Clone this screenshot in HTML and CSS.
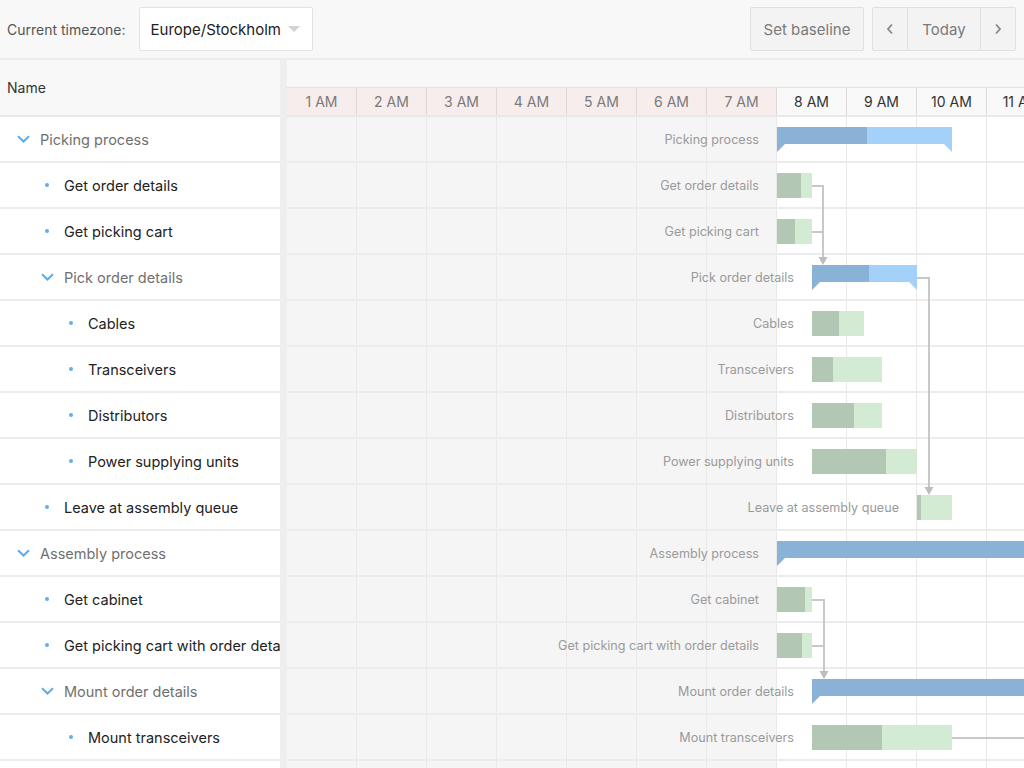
FILE: index.html
```html
<!DOCTYPE html>
<html>
<head>
<meta charset="utf-8">
<link rel="stylesheet" href="styles.css">
</head>
<body>
<div class="toolbar">
  <span class="tz-label">Current timezone:</span>
  <div class="select"><span>Europe/Stockholm</span><span class="caret"></span></div>
  <div class="spacer"></div>
  <button class="btn baseline">Set baseline</button>
  <div class="btn-group">
    <button class="btn nav prev"><svg width="8" height="12" viewBox="0 0 8 12"><path d="M6 1.5L2 6l4 4.5" stroke="#888" stroke-width="1.8" fill="none"/></svg></button>
    <button class="btn today">Today</button>
    <button class="btn nav next"><svg width="8" height="12" viewBox="0 0 8 12"><path d="M2 1.5L6 6l-4 4.5" stroke="#888" stroke-width="1.8" fill="none"/></svg></button>
  </div>
</div>
<div class="main">
  <div class="grid">
    <div class="grid-header">Name</div>
    <div class="grid-body">
      <div class="row lvl0 parent"><span class="ic"><svg width="13" height="8" viewBox="0 0 13 8"><path d="M1 1.2l5.5 5.3 5.5-5.3" stroke="#5aacf0" stroke-width="2" fill="none"/></svg></span><span class="txt">Picking process</span></div>
      <div class="row lvl1"><span class="ic"><span class="dot"></span></span><span class="txt">Get order details</span></div>
      <div class="row lvl1"><span class="ic"><span class="dot"></span></span><span class="txt">Get picking cart</span></div>
      <div class="row lvl1 parent"><span class="ic"><svg width="13" height="8" viewBox="0 0 13 8"><path d="M1 1.2l5.5 5.3 5.5-5.3" stroke="#5aacf0" stroke-width="2" fill="none"/></svg></span><span class="txt">Pick order details</span></div>
      <div class="row lvl2"><span class="ic"><span class="dot"></span></span><span class="txt">Cables</span></div>
      <div class="row lvl2"><span class="ic"><span class="dot"></span></span><span class="txt">Transceivers</span></div>
      <div class="row lvl2"><span class="ic"><span class="dot"></span></span><span class="txt">Distributors</span></div>
      <div class="row lvl2"><span class="ic"><span class="dot"></span></span><span class="txt">Power supplying units</span></div>
      <div class="row lvl1"><span class="ic"><span class="dot"></span></span><span class="txt">Leave at assembly queue</span></div>
      <div class="row lvl0 parent"><span class="ic"><svg width="13" height="8" viewBox="0 0 13 8"><path d="M1 1.2l5.5 5.3 5.5-5.3" stroke="#5aacf0" stroke-width="2" fill="none"/></svg></span><span class="txt">Assembly process</span></div>
      <div class="row lvl1"><span class="ic"><span class="dot"></span></span><span class="txt">Get cabinet</span></div>
      <div class="row lvl1"><span class="ic"><span class="dot"></span></span><span class="txt">Get picking cart with order details</span></div>
      <div class="row lvl1 parent"><span class="ic"><svg width="13" height="8" viewBox="0 0 13 8"><path d="M1 1.2l5.5 5.3 5.5-5.3" stroke="#5aacf0" stroke-width="2" fill="none"/></svg></span><span class="txt">Mount order details</span></div>
      <div class="row lvl2"><span class="ic"><span class="dot"></span></span><span class="txt">Mount transceivers</span></div>
      <div class="row lvl2"></div>
    </div>
  </div>
  <div class="splitter"></div>
  <div class="timeline">
    <div class="tl-header">
      <div class="tl-top"></div>
      <div class="tl-hours">
        <div class="hour off">1 AM</div>
        <div class="hour off">2 AM</div>
        <div class="hour off">3 AM</div>
        <div class="hour off">4 AM</div>
        <div class="hour off">5 AM</div>
        <div class="hour off">6 AM</div>
        <div class="hour off">7 AM</div>
        <div class="hour">8 AM</div>
        <div class="hour">9 AM</div>
        <div class="hour">10 AM</div>
        <div class="hour">11 AM</div>
      </div>
    </div>
    <div class="tl-body">
      <div class="tl-cols">
        <div class="col off"></div><div class="col off"></div><div class="col off"></div><div class="col off"></div><div class="col off"></div><div class="col off"></div><div class="col off"></div>
        <div class="col"></div><div class="col"></div><div class="col"></div><div class="col"></div>
      </div>
      <div class="tl-row"><div class="bar summary tip-light" style="left:490px;width:175px"><div class="done" style="width:90px"></div><span class="lbl">Picking process</span></div></div>
      <div class="tl-row"><div class="bar task" style="left:490px;width:35px"><div class="done" style="width:24px"></div><span class="lbl">Get order details</span></div></div>
      <div class="tl-row"><div class="bar task" style="left:490px;width:35px"><div class="done" style="width:18px"></div><span class="lbl">Get picking cart</span></div></div>
      <div class="tl-row"><div class="bar summary tip-light" style="left:525px;width:105px"><div class="done" style="width:57px"></div><span class="lbl">Pick order details</span></div></div>
      <div class="tl-row"><div class="bar task" style="left:525px;width:52px"><div class="done" style="width:27px"></div><span class="lbl">Cables</span></div></div>
      <div class="tl-row"><div class="bar task" style="left:525px;width:70px"><div class="done" style="width:21px"></div><span class="lbl">Transceivers</span></div></div>
      <div class="tl-row"><div class="bar task" style="left:525px;width:70px"><div class="done" style="width:42px"></div><span class="lbl">Distributors</span></div></div>
      <div class="tl-row"><div class="bar task" style="left:525px;width:105px"><div class="done" style="width:74px"></div><span class="lbl">Power supplying units</span></div></div>
      <div class="tl-row"><div class="bar task" style="left:630px;width:35px"><div class="done" style="width:4px"></div><span class="lbl">Leave at assembly queue</span></div></div>
      <div class="tl-row"><div class="bar summary" style="left:490px;width:600px"><div class="done" style="width:600px"></div><span class="lbl">Assembly process</span></div></div>
      <div class="tl-row"><div class="bar task" style="left:490px;width:35px"><div class="done" style="width:28px"></div><span class="lbl">Get cabinet</span></div></div>
      <div class="tl-row"><div class="bar task" style="left:490px;width:35px"><div class="done" style="width:25px"></div><span class="lbl">Get picking cart with order details</span></div></div>
      <div class="tl-row"><div class="bar summary" style="left:525px;width:600px"><div class="done" style="width:600px"></div><span class="lbl">Mount order details</span></div></div>
      <div class="tl-row"><div class="bar task" style="left:525px;width:140px"><div class="done" style="width:70px"></div><span class="lbl">Mount transceivers</span></div></div>
      <div class="tl-row"></div>
      <svg class="deps" width="770" height="700" viewBox="0 0 770 700">
        <g stroke="#c8c8c8" stroke-width="2" fill="none">
          <path d="M525 69H536V141"/>
          <path d="M525 115H536"/>
          <path d="M630 161H642V371"/>
          <path d="M525 483H537V555"/>
          <path d="M525 529H537"/>
          <path d="M665 621H770"/>
        </g>
        <g fill="#bdbdbd">
          <polygon points="531.5,140 540.5,140 536,148"/>
          <polygon points="637.5,370 646.5,370 642,378"/>
          <polygon points="532.5,554 541.5,554 537,562"/>
        </g>
      </svg>
    </div>
  </div>
</div>
</body>
</html>
```
FILE: styles.css
```css
* { box-sizing: border-box; }
html, body { margin: 0; padding: 0; }
body {
  width: 1024px;
  height: 768px;
  overflow: hidden;
  background: #fff;
  font-family: Inter, "Open Sans", "Liberation Sans", sans-serif;
  color: #222;
}

.toolbar {
  height: 60px;
  border-bottom: 2px solid #ececec;
  background: #f8f8f8;
  display: flex;
  align-items: center;
  padding: 0 8px 0 7px;
}
.tz-label {
  font-size: 14px;
  color: #555;
  margin-right: 13px;
}
.select {
  width: 174px;
  height: 44px;
  background: #fff;
  border: 1px solid #e3e3e3;
  border-radius: 2px;
  display: flex;
  align-items: center;
  justify-content: space-between;
  padding: 0 12px 0 11px;
  font-size: 15px;
  color: #222;
}
.caret {
  width: 0;
  height: 0;
  border-left: 6px solid transparent;
  border-right: 6px solid transparent;
  border-top: 6px solid #d2d2d2;
}
.spacer { flex: 1; }
.btn {
  height: 44px;
  border: 1px solid #e0e0e0;
  background: #f3f3f3;
  color: #7a7a7a;
  font-family: inherit;
  font-size: 15px;
  padding: 0;
  border-radius: 2px;
  display: flex;
  align-items: center;
  justify-content: center;
}
.baseline { width: 114px; }
.btn-group { display: flex; margin-left: 8px; }
.btn-group .btn { border-radius: 0; }
.btn-group .btn + .btn { border-left: none; }
.btn-group .prev { width: 36px; border-radius: 2px 0 0 2px; }
.btn-group .today { width: 73px; border-left: 1px solid #dcdcdc; }
.btn-group .next { width: 35px; border-left: 1px solid #dcdcdc; border-radius: 0 2px 2px 0; }

.main {
  display: flex;
  height: 708px;
}
.grid {
  width: 280px;
  flex: none;
  display: flex;
  flex-direction: column;
  overflow: hidden;
}
.grid-header {
  flex: none;
  height: 57px;
  border-bottom: 2px solid #e8e8e8;
  background: #f8f8f8;
  display: flex;
  align-items: center;
  padding-left: 7px;
  font-size: 14px;
  color: #333;
}
.grid-body { flex: none; }
.row {
  height: 46px;
  border-bottom: 2px solid #ececec;
  display: flex;
  align-items: center;
  white-space: nowrap;
  overflow: hidden;
  font-size: 14.5px;
  color: #222;
}
.row.parent { color: #707070; }
.row.lvl0 { padding-left: 11px; }
.row.lvl1 { padding-left: 35px; }
.row.lvl2 { padding-left: 59px; }
.ic {
  width: 24px;
  flex: none;
  display: flex;
  align-items: center;
  justify-content: center;
}
.dot {
  width: 4px;
  height: 4px;
  border-radius: 50%;
  background: #62aef0;
}
.txt { margin-left: 5px; }

.splitter {
  width: 7px;
  flex: none;
  background: #eeeeee;
}
.timeline {
  flex: 1;
  min-width: 0;
  overflow: hidden;
}
.tl-header { width: 770px; }
.tl-top {
  height: 28px;
  border-bottom: 1px solid #e2e2e2;
  background: #f8f8f8;
}
.tl-hours {
  display: flex;
  height: 29px;
  border-bottom: 2px solid #e8e8e8;
}
.hour {
  width: 70px;
  flex: none;
  border-right: 1px solid #e0d8d8;
  display: flex;
  align-items: center;
  justify-content: center;
  font-size: 14px;
  color: #333;
  background: #f9f9f9;
}
.hour.off {
  background: #f7eded;
  color: #7a7a7a;
}

.tl-body {
  position: relative;
  width: 770px;
  height: 651px;
}
.tl-cols {
  position: absolute;
  inset: 0;
  display: flex;
}
.col {
  width: 70px;
  flex: none;
  border-right: 1px solid #e9e9e9;
}
.col.off { background: #f5f5f5; }
.tl-row {
  position: relative;
  height: 46px;
  border-bottom: 2px solid #ececec;
}

.bar {
  position: absolute;
  top: 10px;
  display: flex;
}
.bar .done { height: 100%; flex: none; }
.task {
  height: 25px;
  background: #d3ebd3;
}
.task .done { background: #b2c8b4; }
.summary {
  height: 17px;
  background: #a3d1f9;
}
.summary .done { background: #89b2d6; }
.summary::before {
  content: "";
  position: absolute;
  left: 0;
  top: 100%;
  border-top: 8px solid #89b2d6;
  border-right: 8px solid transparent;
}
.summary.tip-light::after {
  content: "";
  position: absolute;
  right: 0;
  top: 100%;
  border-top: 8px solid #a3d1f9;
  border-left: 8px solid transparent;
}
.lbl {
  position: absolute;
  right: 100%;
  margin-right: 18px;
  top: 0;
  line-height: 25px;
  font-size: 12.6px;
  color: #9a9a9a;
  white-space: nowrap;
}
.deps {
  position: absolute;
  top: 0;
  left: 0;
  pointer-events: none;
}
```
